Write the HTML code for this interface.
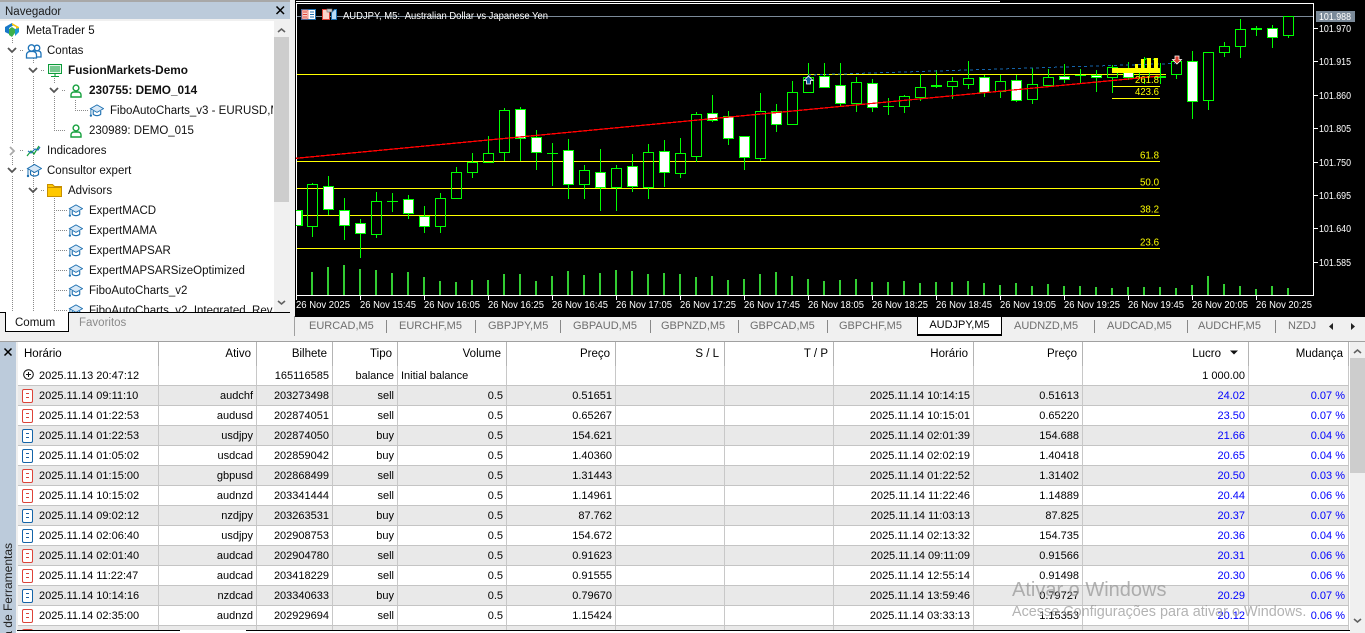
<!DOCTYPE html>
<html lang="pt"><head><meta charset="utf-8"><title>MetaTrader 5</title>
<style>
html,body{margin:0;padding:0;width:1365px;height:633px;overflow:hidden;background:#f0f0f0;font-family:"Liberation Sans",sans-serif}
svg{position:absolute;display:block}
svg text{font-family:"Liberation Sans",sans-serif}
.tab{position:absolute;top:317px;line-height:19px;font-size:11px;color:#6e6e6e;white-space:nowrap}
.sep{position:absolute;top:320px;width:1px;height:13px;background:#888}
#tw{position:absolute;left:18px;top:342px;width:1332px;height:288px;overflow:hidden;background:#fff}
table{border-collapse:separate;border-spacing:0;table-layout:fixed;width:1331px;font-size:11px;color:#000}
th{height:24px;padding:0 5px 0 0;font-weight:normal;text-align:right;font-size:11.5px;border-right:1px solid #b4b4b4;box-sizing:border-box;white-space:nowrap;overflow:hidden}
td{height:20px;padding:0 3px 0 0;text-align:right;box-sizing:border-box;border-right:1px solid #c8c8c8;border-bottom:1px solid #c4c4c4;white-space:nowrap;overflow:hidden;line-height:18px}
tr.g td{background:#e9e9e9}
td:first-child{text-align:left;padding-left:21px;position:relative}
th:first-child{text-align:left;padding-left:6px}
td.u{color:#0000ff}
i{position:absolute;left:4px;top:3px;width:9px;height:12px;border:1px solid;border-radius:2px;background:#fff}
i:before{content:"";position:absolute;left:3px;top:3px;width:3px;height:1px;background:currentColor;box-shadow:0 4px 0 currentColor}
i.s{color:#dc4338}
i.b{color:#1464a8}
.wm{position:absolute;left:1012px;color:rgba(150,150,150,.72);white-space:nowrap}
</style></head><body>

<svg style="left:0;top:0" width="295" height="340" viewBox="0 0 295 340">
<defs>
<symbol id="h" viewBox="0 0 16 15"><path d="M1.5 5.5L8.5 1.5l7 4-7 4z" fill="#d7e8f7" stroke="#1c6fb0"/><path d="M4.5 8v3.5c2 2 6 2 8 0V8" fill="none" stroke="#1c6fb0" stroke-width="1.2"/><path d="M2 6v6.5" stroke="#1c6fb0" fill="none"/><circle cx="2" cy="13" r="1.2" fill="#1c6fb0"/></symbol>
<symbol id="us" viewBox="0 0 12 14"><circle cx="6" cy="4" r="2.9" fill="#fff" stroke="#14a03c" stroke-width="1.4"/><path d="M1 13v-2c0-2 1.5-3 3-3h4c1.500 0 3 1 3 3v2z" fill="#fff" stroke="#14a03c" stroke-width="1.4"/></symbol>
</defs>
<rect width="295" height="340" fill="#f0f0f0"/>
<rect y="0" width="290" height="2" fill="#a8a8a8"/>
<rect y="2" width="290" height="17" fill="#bccbdb"/>
<text x="5" y="15" font-size="11.500" fill="#1a1a1a">Navegador</text>
<path d="M276.500 6.500l7.500 7.500M284 6.500l-7.500 7.500" stroke="#000" stroke-width="1.500" fill="none"/>
<rect x="0" y="21" width="274" height="291" fill="#fff"/>
<rect x="274" y="21" width="16" height="291" fill="#f0f0f0"/>
<rect x="274" y="37" width="15" height="165" fill="#cdcdcd"/>
<path d="M278 32l3.500-3 3.500 3M278 301l3.500 3 3.500-3" stroke="#606060" stroke-width="1.600" fill="none"/>

<g stroke="#8a8a8a" stroke-dasharray="1 1" fill="none">
<path d="M12.500 38V44M12.500 56V144M12.500 156V165M12.500 176V312"/>
<path d="M33.500 58V64M33.500 76V312"/>
<path d="M54.500 78V84M54.500 96V130.500H66"/>
<path d="M75.500 100V110.500H88"/>
<path d="M54.500 198V312"/>
<path d="M54 210.500H67M54 230.500H67M54 250.500H67M54 270.500H67M54 290.500H67M54 310.500H67"/>
<path d="M20 50.500H24M41 70.500H45M62 90.500H66M20 150.500H24M20 170.500H24M41 190.500H45"/>
</g>
<g stroke="#555" stroke-width="1.800" fill="none">
<path d="M8 48l4 4 4-4M29 68l4 4 4-4M50 88l4 4 4-4M8 168l4 4 4-4M29 188l4 4 4-4"/>
<path d="M10 147l4 4-4 4" stroke="#aaa"/>
</g>

<path d="M5 27l7-4 2 2-5 3v6l-4-2z" fill="#1878c8"/><path d="M12 23l7 4v4l-3-1v-3l-4-2z" fill="#f4c20d"/><path d="M9 29l3-2 3 2v4l-3 4-3-2z" fill="#3cb04a"/><path d="M15 29l4-1v4l-4 4z" fill="#1c9ad6"/>
<g fill="#fff" stroke="#1e73b8" stroke-width="1.300"><circle cx="37" cy="48" r="2.800"/><path d="M33 57v-3c0-2 1-3 3-3h2c2 0 3 1 3 3v3z"/><circle cx="31.500" cy="48" r="3.200"/><path d="M26.500 58v-3c0-2 1.500-3.500 3.500-3.500h3c2 0 3.500 1.500 3.500 3.500v3z"/></g>
<g fill="none" stroke="#0c9b3a"><rect x="48.500" y="64.500" width="13" height="9" fill="#e4f7e8"/><path d="M50 67h10M50 69h10M50 71h10M55 74v2M51 76.500h8" stroke-width="1.100"/></g>
<use href="#us" x="70" y="84" width="12" height="14"/>
<use href="#h" x="89" y="103" width="15" height="15"/>
<use href="#us" x="70" y="124" width="12" height="14"/>
<path d="M27 156l4-5 3 3 5-8" fill="none" stroke="#14a03c" stroke-width="1.200"/><path d="M28 151l3 2 4-4 3 1 2-3" fill="none" stroke="#1e73b8" stroke-width="1.200"/>
<use href="#h" x="26" y="163" width="16" height="15"/>
<path d="M47.500 196.500v-12h5l2 2h7v10z" fill="#ffc800" stroke="#c78f00"/><path d="M48 187.500h13" stroke="#c78f00"/>
<use href="#h" x="68" y="203" width="15" height="15"/><use href="#h" x="68" y="223" width="15" height="15"/><use href="#h" x="68" y="243" width="15" height="15"/><use href="#h" x="68" y="263" width="15" height="15"/><use href="#h" x="68" y="283" width="15" height="15"/><use href="#h" x="68" y="303" width="15" height="15"/>

<g font-size="11.500" fill="#101010">
<text x="26" y="34">MetaTrader 5</text>
<text x="47" y="54">Contas</text>
<text x="68" y="74" font-weight="bold" font-size="11.800">FusionMarkets-Demo</text>
<text x="89" y="94" font-weight="bold" font-size="11.800">230755: DEMO_014</text>
<svg x="0" y="0" width="273" height="320"><text x="110" y="114">FiboAutoCharts_v3 - EURUSD,M5</text><text x="89" y="314">FiboAutoCharts_v2_Integrated_Rev</text></svg>
<text x="89" y="134">230989: DEMO_015</text>
<text x="47" y="154">Indicadores</text>
<text x="47" y="174">Consultor expert</text>
<text x="68" y="194">Advisors</text>
<text x="89" y="214">ExpertMACD</text>
<text x="89" y="234">ExpertMAMA</text>
<text x="89" y="254">ExpertMAPSAR</text>
<text x="89" y="274">ExpertMAPSARSizeOptimized</text>
<text x="89" y="294">FiboAutoCharts_v2</text>
</g>
<rect x="0" y="312" width="290" height="28" fill="#f0f0f0"/>
<rect x="0" y="312" width="5" height="1" fill="#000"/><rect x="69" y="312" width="221" height="1" fill="#000"/>
<path d="M5.500 312V331.500H68.500V312" fill="#fff" stroke="#000"/>
<text x="15" y="326" font-size="11.500" fill="#111">Comum</text>
<text x="79" y="326" font-size="11.500" fill="#8a8a8a">Favoritos</text>
<rect x="294" y="316" width="1" height="20" fill="#a0a0a0"/>
</svg>

<svg style="left:295px;top:0" width="1070" height="317" viewBox="295 0 1070 317">
<rect x="295" y="0" width="1070" height="317" fill="#000"/>
<path d="M296 1.500H1000M296 3.500H1313.500V295.500H296.500V3" fill="none" stroke="#fff"/>
<path d="M297 16.500H1313" stroke="#7b8a99"/>
<g stroke="#ffff00" fill="none">
<path d="M297 74.500H1166M297 161.500H1160M297 188.500H1160M297 215.500H1160M297 248.500H1160M1112 86.500H1160M1112 98.500H1160"/>
</g>
<g fill="#32cd32">
<path d="M311 272h2v23h-2zM327 267h2v28h-2zM343 265h2v30h-2zM359 269h2v26h-2zM375 270h2v25h-2zM391 273h2v22h-2zM407 272h2v23h-2zM423 277h2v18h-2zM439 281h2v14h-2zM455 282h2v13h-2zM471 280h2v15h-2zM487 280h2v15h-2zM503 274h2v21h-2zM519 274h2v21h-2zM535 281h2v14h-2zM551 276h2v19h-2zM567 271h2v24h-2zM583 275h2v20h-2zM599 273h2v22h-2zM615 270h2v25h-2zM631 271h2v24h-2zM647 274h2v21h-2zM663 273h2v22h-2zM679 274h2v21h-2zM695 277h2v18h-2zM711 276h2v19h-2zM727 280h2v15h-2zM743 279h2v16h-2zM759 274h2v21h-2zM775 272h2v23h-2zM791 276h2v19h-2zM807 279h2v16h-2zM823 281h2v14h-2zM839 280h2v15h-2zM855 279h2v16h-2zM871 282h2v13h-2zM887 282h2v13h-2zM903 281h2v14h-2zM919 283h2v12h-2zM935 282h2v13h-2zM951 282h2v13h-2zM967 281h2v14h-2zM983 283h2v12h-2zM999 285h2v10h-2zM1015 283h2v12h-2zM1031 286h2v9h-2zM1047 284h2v11h-2zM1063 286h2v9h-2zM1079 286h2v9h-2zM1095 287h2v8h-2zM1111 288h2v7h-2zM1127 287h2v8h-2zM1143 287h2v8h-2zM1159 287h2v8h-2zM1175 288h2v7h-2zM1191 285h2v10h-2zM1207 276h2v19h-2zM1223 284h2v11h-2zM1239 286h2v9h-2zM1255 289h2v6h-2zM1271 286h2v9h-2zM1287 288h2v7h-2z"/>
</g>
<g stroke="#00ff00" fill="none">
<path d="M312.500 183V184M312.500 226V237M376.500 192V201M376.500 234V238M440.500 193V198M440.500 226V233M456.500 167V172M472.500 153V162M472.500 172V178M488.500 136V153M488.500 162V163M504.500 108V110M504.500 152V161M584.500 165V170M584.500 184V199M616.500 165V168M616.500 187V211M648.500 144V152M648.500 187V199M680.500 138V153M680.500 173V178M696.500 112V114M696.500 156V162M760.500 93V111M760.500 158V161M792.500 81V92M792.500 124V125M808.500 63V77M808.500 92V93M856.500 77V82M856.500 103V112M904.500 95V96M904.500 106V113M920.500 74V87M920.500 97V101M952.500 77V81M952.500 86V99M968.500 61V78M968.500 84V89M1000.500 75V81M1000.500 91V98M1032.500 68V84M1032.500 99V104M1048.500 69V77M1112.500 65V67M1112.500 77V93M1144.500 57V68M1144.500 77V84M1176.500 60V61M1176.500 74V79M1208.500 100V110M1224.500 42V46M1224.500 52V57M1240.500 19V29M1240.500 46V58M1288.500 35V38"/>
<path d="M328.500 176V186M328.500 209V215M344.500 198V210M344.500 225V240M360.500 219V223M360.500 233V258M408.500 195V199M408.500 213V219M424.500 206V216M424.500 226V233M520.500 107V109M520.500 138V161M536.500 130V137M536.500 152V170M568.500 139V150M568.500 184V199M600.500 149V172M600.500 187V211M632.500 154V166M632.500 186V192M664.500 140V151M664.500 172V187M712.500 95V113M712.500 120V122M728.500 111V116M728.500 138V145M744.500 157V170M776.500 104V111M776.500 124V132M824.500 63V76M824.500 87V88M840.500 63V85M840.500 103V106M872.500 79V83M872.500 107V112M984.500 75V77M984.500 92V97M1016.500 75V80M1016.500 100V102M1064.500 64V76M1064.500 79V83M1096.500 70V75M1096.500 77V92M1128.500 62V68M1128.500 77V80M1192.500 51V61M1192.500 101V119M1272.500 25V28M1272.500 37V48"/>
<path d="M392.500 193V212M387 201.500H398M552.500 143V186M547 153.500H558M888.500 98V115M883 106.500H894M936.500 70V88M931 85.500H942M931 86.500H942M1080.500 69V84M1075 75.500H1086M1160.500 63V84M1155 76.500H1166M1155 77.500H1166M1256.500 26V36M1251 28.500H1262M1251 29.500H1262"/>
<g stroke-width="1">
<rect x="307.500" y="184.500" width="10" height="42"/><rect x="371.500" y="201.500" width="10" height="33"/><rect x="435.500" y="198.500" width="10" height="28"/><rect x="451.500" y="172.500" width="10" height="26"/><rect x="467.500" y="162.500" width="10" height="10"/><rect x="483.500" y="153.500" width="10" height="9"/><rect x="499.500" y="110.500" width="10" height="42"/><rect x="579.500" y="170.500" width="10" height="14"/><rect x="611.500" y="168.500" width="10" height="19"/><rect x="643.500" y="152.500" width="10" height="35"/><rect x="675.500" y="153.500" width="10" height="20"/><rect x="691.500" y="114.500" width="10" height="42"/><rect x="755.500" y="111.500" width="10" height="47"/><rect x="787.500" y="92.500" width="10" height="32"/><rect x="803.500" y="77.500" width="10" height="15"/><rect x="851.500" y="82.500" width="10" height="21"/><rect x="899.500" y="96.500" width="10" height="10"/><rect x="915.500" y="87.500" width="10" height="10"/><rect x="947.500" y="81.500" width="10" height="5"/><rect x="963.500" y="78.500" width="10" height="6"/><rect x="995.500" y="81.500" width="10" height="10"/><rect x="1027.500" y="84.500" width="10" height="15"/><rect x="1043.500" y="77.500" width="10" height="8"/><rect x="1107.500" y="67.500" width="10" height="10"/><rect x="1139.500" y="68.500" width="10" height="9"/><rect x="1171.500" y="61.500" width="10" height="13"/><rect x="1203.500" y="52.500" width="10" height="48"/><rect x="1219.500" y="46.500" width="10" height="6"/><rect x="1235.500" y="29.500" width="10" height="17"/><rect x="1283.500" y="16.500" width="10" height="19"/>
</g>
<g fill="#fff">
<rect x="323.500" y="186.500" width="10" height="23"/><rect x="339.500" y="210.500" width="10" height="15"/><rect x="355.500" y="223.500" width="10" height="10"/><rect x="403.500" y="199.500" width="10" height="14"/><rect x="419.500" y="216.500" width="10" height="10"/><rect x="515.500" y="109.500" width="10" height="29"/><rect x="531.500" y="137.500" width="10" height="15"/><rect x="563.500" y="150.500" width="10" height="34"/><rect x="595.500" y="172.500" width="10" height="15"/><rect x="627.500" y="166.500" width="10" height="20"/><rect x="659.500" y="151.500" width="10" height="21"/><rect x="707.500" y="113.500" width="10" height="7"/><rect x="723.500" y="116.500" width="10" height="22"/><rect x="739.500" y="136.500" width="10" height="21"/><rect x="771.500" y="111.500" width="10" height="13"/><rect x="819.500" y="76.500" width="10" height="11"/><rect x="835.500" y="85.500" width="10" height="18"/><rect x="867.500" y="83.500" width="10" height="24"/><rect x="979.500" y="77.500" width="10" height="15"/><rect x="1011.500" y="80.500" width="10" height="20"/><rect x="1059.500" y="76.500" width="10" height="3"/><rect x="1091.500" y="75.500" width="10" height="2"/><rect x="1123.500" y="68.500" width="10" height="9"/><rect x="1187.500" y="61.500" width="10" height="40"/><rect x="1267.500" y="28.500" width="10" height="9"/>
</g>
<path d="M1145 60q2-3 4 0M1153 60q2-3 4 0"/>
</g>
<rect x="296" y="210" width="7" height="16" fill="#00ff00"/><rect x="296" y="211" width="5" height="14" fill="#fff"/>
<path d="M808 75L1175 63.500" stroke="#1464aa" stroke-dasharray="3 3" fill="none" shape-rendering="crispEdges"/>
<path d="M296 158.300L1160 76" stroke="#ff0000" stroke-width="1.300" fill="none" shape-rendering="crispEdges"/>
<g fill="#ffff00">
<rect x="1112" y="68" width="48" height="5"/><rect x="1141" y="59" width="3" height="14"/><rect x="1147" y="58" width="4" height="15"/><rect x="1154" y="58" width="4" height="15"/><rect x="1135" y="64" width="3" height="9"/>
</g>
<g font-size="10" fill="#ffff00" text-anchor="end">
<text x="1159" y="83" textLength="24" lengthAdjust="spacingAndGlyphs">261.8</text>
<text x="1159" y="95" textLength="24" lengthAdjust="spacingAndGlyphs">423.6</text>
<text x="1159" y="158.500" textLength="19" lengthAdjust="spacingAndGlyphs">61.8</text>
<text x="1159" y="185.500" textLength="19" lengthAdjust="spacingAndGlyphs">50.0</text>
<text x="1159" y="212.500" textLength="19" lengthAdjust="spacingAndGlyphs">38.2</text>
<text x="1159" y="245.500" textLength="19" lengthAdjust="spacingAndGlyphs">23.6</text>
</g>
<path d="M808.500 76l4.500 4.500h-2.500V84h-4v-3.500H804z" fill="#0f5aa0" stroke="#fff" stroke-width=".8"/>
<path d="M1177 64l4.500-4.500H1179V56h-4v3.500h-2.500z" fill="#dc4030" stroke="#fff" stroke-width=".8"/>
<rect x="301.500" y="9.500" width="14" height="10" fill="#fff" stroke="#1c6fb0"/><rect x="302" y="10" width="6" height="9" fill="#fbd3cc" stroke="#dc4338" stroke-width=".6"/><path d="M303 12h4M303 14.500h4M303 17h4" stroke="#dc4338"/><path d="M310 12h4M310 14.500h4M310 17h4" stroke="#1c6fb0"/>
<path d="M322.500 19.500v-10h4l3 3v7z" fill="#fbd3cc" stroke="#dc4338"/><path d="M331.500 19.500v-7l3-3h2v10z" fill="#b9dcf5" stroke="#1c6fb0"/><rect x="327" y="9" width="5" height="3" fill="#ccc" stroke="#777" stroke-width=".6"/>
<text x="343" y="19" font-size="10" fill="#fff" textLength="205" lengthAdjust="spacingAndGlyphs" xml:space="preserve">AUDJPY, M5:  Australian Dollar vs Japanese Yen</text>
<path d="M1314 28.500h4M1314 61.500h4M1314 95.500h4M1314 128.500h4M1314 162.500h4M1314 195.500h4M1314 228.500h4M1314 262.500h4" stroke="#fff"/>
<rect x="1316" y="11" width="39" height="11" fill="#7b8a99"/>
<g font-size="10" fill="#fff">
<text x="1319" y="20" textLength="32" lengthAdjust="spacingAndGlyphs">101.988</text>
<text x="1319" y="32" textLength="32" lengthAdjust="spacingAndGlyphs">101.970</text>
<text x="1319" y="65" textLength="32" lengthAdjust="spacingAndGlyphs">101.915</text>
<text x="1319" y="99" textLength="32" lengthAdjust="spacingAndGlyphs">101.860</text>
<text x="1319" y="132" textLength="32" lengthAdjust="spacingAndGlyphs">101.805</text>
<text x="1319" y="166" textLength="32" lengthAdjust="spacingAndGlyphs">101.750</text>
<text x="1319" y="199" textLength="32" lengthAdjust="spacingAndGlyphs">101.695</text>
<text x="1319" y="232" textLength="32" lengthAdjust="spacingAndGlyphs">101.640</text>
<text x="1319" y="266" textLength="32" lengthAdjust="spacingAndGlyphs">101.585</text>
</g>
<path d="M296.500 296v4M360.500 296v4M424.500 296v4M488.500 296v4M552.500 296v4M616.500 296v4M680.500 296v4M744.500 296v4M808.500 296v4M872.500 296v4M936.500 296v4M1000.500 296v4M1064.500 296v4M1128.500 296v4M1192.500 296v4M1256.500 296v4" stroke="#fff"/>
<g font-size="10" fill="#fff">
<text x="296" y="308" textLength="54" lengthAdjust="spacingAndGlyphs">26 Nov 2025</text>
<text x="360" y="308" textLength="56" lengthAdjust="spacingAndGlyphs">26 Nov 15:45</text>
<text x="424" y="308" textLength="56" lengthAdjust="spacingAndGlyphs">26 Nov 16:05</text>
<text x="488" y="308" textLength="56" lengthAdjust="spacingAndGlyphs">26 Nov 16:25</text>
<text x="552" y="308" textLength="56" lengthAdjust="spacingAndGlyphs">26 Nov 16:45</text>
<text x="616" y="308" textLength="56" lengthAdjust="spacingAndGlyphs">26 Nov 17:05</text>
<text x="680" y="308" textLength="56" lengthAdjust="spacingAndGlyphs">26 Nov 17:25</text>
<text x="744" y="308" textLength="56" lengthAdjust="spacingAndGlyphs">26 Nov 17:45</text>
<text x="808" y="308" textLength="56" lengthAdjust="spacingAndGlyphs">26 Nov 18:05</text>
<text x="872" y="308" textLength="56" lengthAdjust="spacingAndGlyphs">26 Nov 18:25</text>
<text x="936" y="308" textLength="56" lengthAdjust="spacingAndGlyphs">26 Nov 18:45</text>
<text x="1000" y="308" textLength="56" lengthAdjust="spacingAndGlyphs">26 Nov 19:05</text>
<text x="1064" y="308" textLength="56" lengthAdjust="spacingAndGlyphs">26 Nov 19:25</text>
<text x="1128" y="308" textLength="56" lengthAdjust="spacingAndGlyphs">26 Nov 19:45</text>
<text x="1192" y="308" textLength="56" lengthAdjust="spacingAndGlyphs">26 Nov 20:05</text>
<text x="1256" y="308" textLength="56" lengthAdjust="spacingAndGlyphs">26 Nov 20:25</text>
</g>
</svg>

<span class="tab" style="left:309px">EURCAD,M5</span><span class="sep" style="left:386px"></span>
<span class="tab" style="left:399px">EURCHF,M5</span><span class="sep" style="left:475px"></span>
<span class="tab" style="left:488px">GBPJPY,M5</span><span class="sep" style="left:560px"></span>
<span class="tab" style="left:573px">GBPAUD,M5</span><span class="sep" style="left:650px"></span>
<span class="tab" style="left:661px">GBPNZD,M5</span><span class="sep" style="left:738px"></span>
<span class="tab" style="left:750px">GBPCAD,M5</span><span class="sep" style="left:827px"></span>
<span class="tab" style="left:839px">GBPCHF,M5</span>
<span class="tab" style="left:917px;top:316px;width:83px;height:17px;background:#fff;border:1px solid #000;border-bottom-width:2px;text-align:center;color:#000;line-height:17px">AUDJPY,M5</span>
<span class="tab" style="left:1014px">AUDNZD,M5</span><span class="sep" style="left:1094px"></span>
<span class="tab" style="left:1107px">AUDCAD,M5</span><span class="sep" style="left:1187px"></span>
<span class="tab" style="left:1198px">AUDCHF,M5</span><span class="sep" style="left:1275px"></span>
<span class="tab" style="left:1288px;width:29px;overflow:hidden">NZDJPY,M5</span>
<svg style="left:1320px;top:317px" width="45" height="20" viewBox="0 0 45 20"><path d="M13 6v7l-4-3.500zM31 6v7l4-3.500z" fill="#222"/></svg>

<svg style="left:0;top:336px" width="1365" height="297" viewBox="0 336 1365 297">
<rect x="0" y="341" width="1365" height="1" fill="#a0a0a0"/>
<rect x="0" y="342" width="16" height="291" fill="#bccbdb"/>
<path d="M4.500 348.500l7 7M11.500 348.500l-7 7" stroke="#000" stroke-width="1.500"/>
<text transform="translate(12,543) rotate(-90)" text-anchor="end" font-size="12" fill="#222">Caixa de Ferramentas</text>
<rect x="1350" y="342" width="15" height="291" fill="#f0f0f0"/>
<rect x="1350" y="358" width="15" height="115" fill="#cdcdcd"/>
<path d="M1354 353l3.500-3 3.500 3M1354 619l3.500 3 3.500-3" stroke="#606060" stroke-width="1.600" fill="none"/>
<rect x="16" y="630" width="1334" height="3" fill="#fff"/>
<path d="M17 630.500H180M246 630.500H1350" stroke="#000"/>
</svg>

<div id="tw"><table>
<colgroup><col style="width:141px"><col style="width:98px"><col style="width:76px"><col style="width:65px"><col style="width:109px"><col style="width:109px"><col style="width:109px"><col style="width:109px"><col style="width:140px"><col style="width:109px"><col style="width:166px"><col style="width:100px"></colgroup>
<tr><th>Horário</th><th>Ativo</th><th>Bilhete</th><th>Tipo</th><th>Volume</th><th>Preço</th><th>S / L</th><th>T / P</th><th>Horário</th><th>Preço</th><th style="padding-right:27px">Lucro</th><th>Mudança</th></tr>
<tr><td><svg style="left:5px;top:3px" width="11" height="11" viewBox="0 0 11 11"><circle cx="5.500" cy="5.500" r="4.800" fill="none" stroke="#111"/><path d="M3 5.500h5M5.500 3v5" stroke="#111"/></svg>2025.11.13 20:47:12</td><td></td><td>165116585</td><td>balance</td><td style="text-align:left;padding-left:3px">Initial balance</td><td></td><td></td><td></td><td></td><td></td><td>1 000.00</td><td></td></tr>
<tr class="g"><td><i class="s"></i>2025.11.14 09:11:10</td><td>audchf</td><td>203273498</td><td>sell</td><td>0.5</td><td>0.51651</td><td></td><td></td><td>2025.11.14 10:14:15</td><td>0.51613</td><td class="u">24.02</td><td class="u">0.07 %</td></tr>
<tr><td><i class="s"></i>2025.11.14 01:22:53</td><td>audusd</td><td>202874051</td><td>sell</td><td>0.5</td><td>0.65267</td><td></td><td></td><td>2025.11.14 10:15:01</td><td>0.65220</td><td class="u">23.50</td><td class="u">0.07 %</td></tr>
<tr class="g"><td><i class="b"></i>2025.11.14 01:22:53</td><td>usdjpy</td><td>202874050</td><td>buy</td><td>0.5</td><td>154.621</td><td></td><td></td><td>2025.11.14 02:01:39</td><td>154.688</td><td class="u">21.66</td><td class="u">0.04 %</td></tr>
<tr><td><i class="b"></i>2025.11.14 01:05:02</td><td>usdcad</td><td>202859042</td><td>buy</td><td>0.5</td><td>1.40360</td><td></td><td></td><td>2025.11.14 02:02:19</td><td>1.40418</td><td class="u">20.65</td><td class="u">0.04 %</td></tr>
<tr class="g"><td><i class="s"></i>2025.11.14 01:15:00</td><td>gbpusd</td><td>202868499</td><td>sell</td><td>0.5</td><td>1.31443</td><td></td><td></td><td>2025.11.14 01:22:52</td><td>1.31402</td><td class="u">20.50</td><td class="u">0.03 %</td></tr>
<tr><td><i class="s"></i>2025.11.14 10:15:02</td><td>audnzd</td><td>203341444</td><td>sell</td><td>0.5</td><td>1.14961</td><td></td><td></td><td>2025.11.14 11:22:46</td><td>1.14889</td><td class="u">20.44</td><td class="u">0.06 %</td></tr>
<tr class="g"><td><i class="b"></i>2025.11.14 09:02:12</td><td>nzdjpy</td><td>203263531</td><td>buy</td><td>0.5</td><td>87.762</td><td></td><td></td><td>2025.11.14 11:03:13</td><td>87.825</td><td class="u">20.37</td><td class="u">0.07 %</td></tr>
<tr><td><i class="b"></i>2025.11.14 02:06:40</td><td>usdjpy</td><td>202908753</td><td>buy</td><td>0.5</td><td>154.672</td><td></td><td></td><td>2025.11.14 02:13:32</td><td>154.735</td><td class="u">20.36</td><td class="u">0.04 %</td></tr>
<tr class="g"><td><i class="s"></i>2025.11.14 02:01:40</td><td>audcad</td><td>202904780</td><td>sell</td><td>0.5</td><td>0.91623</td><td></td><td></td><td>2025.11.14 09:11:09</td><td>0.91566</td><td class="u">20.31</td><td class="u">0.06 %</td></tr>
<tr><td><i class="s"></i>2025.11.14 11:22:47</td><td>audcad</td><td>203418229</td><td>sell</td><td>0.5</td><td>0.91555</td><td></td><td></td><td>2025.11.14 12:55:14</td><td>0.91498</td><td class="u">20.30</td><td class="u">0.06 %</td></tr>
<tr class="g"><td><i class="b"></i>2025.11.14 10:14:16</td><td>nzdcad</td><td>203340633</td><td>buy</td><td>0.5</td><td>0.79670</td><td></td><td></td><td>2025.11.14 13:59:46</td><td>0.79727</td><td class="u">20.29</td><td class="u">0.07 %</td></tr>
<tr><td><i class="s"></i>2025.11.14 02:35:00</td><td>audnzd</td><td>202929694</td><td>sell</td><td>0.5</td><td>1.15424</td><td></td><td></td><td>2025.11.14 03:33:13</td><td>1.15353</td><td class="u">20.12</td><td class="u">0.06 %</td></tr>
<tr class="g"><td><i class="s"></i></td><td></td><td></td><td></td><td></td><td></td><td></td><td></td><td></td><td></td><td></td><td></td></tr>
</table></div>
<svg style="left:1228px;top:349px" width="12" height="8" viewBox="0 0 12 8"><path d="M2 1.500h8l-4 4z" fill="#111"/></svg>

<div class="wm" style="top:579px;font-size:20px">Ativar o Windows</div>
<div class="wm" style="top:604px;font-size:14.400px">Acesse Configurações para ativar o Windows.</div>
</body></html>
